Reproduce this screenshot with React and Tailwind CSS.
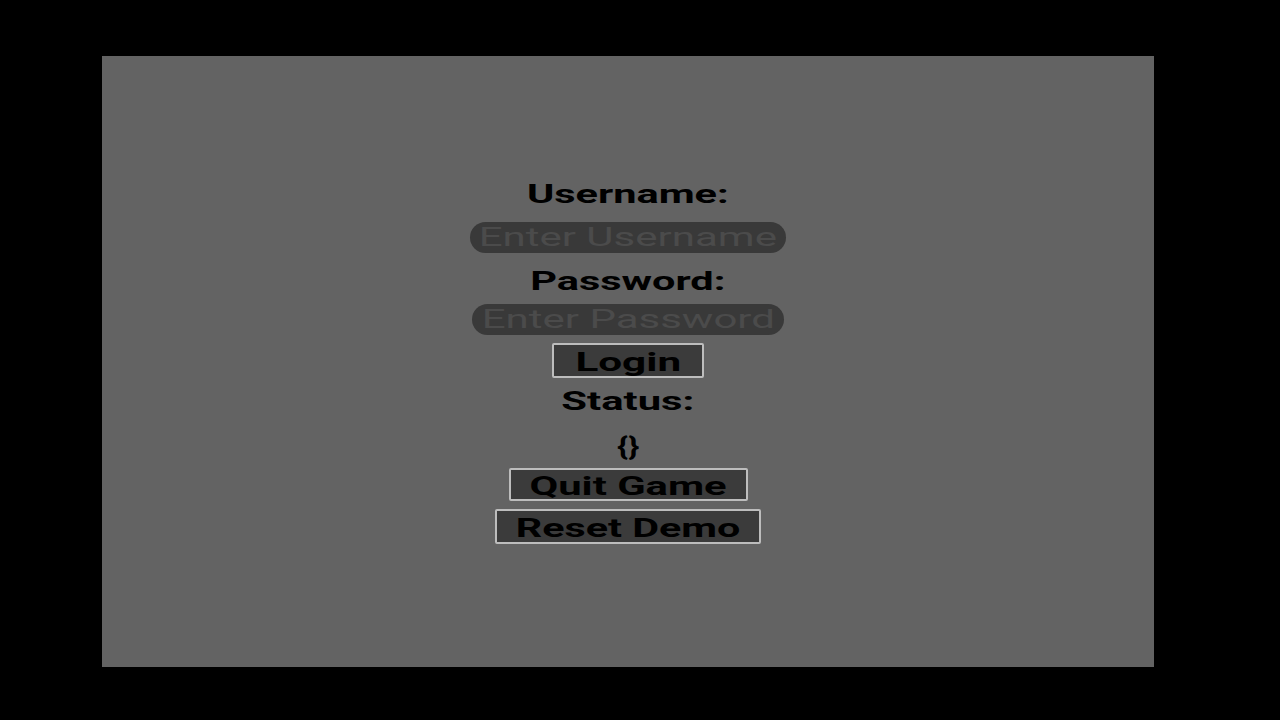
export default function App() {
  const font = { fontFamily: "Roboto, 'Liberation Sans', sans-serif" };
  return (
    <div className="w-[1280px] h-[720px] bg-black pt-[56px] pl-[102px]" style={font}>
      <div className="w-[1052px] h-[611px] bg-[#636363] flex flex-col items-center pt-[120px]">
        <div className="h-[36px] flex items-center justify-center">
          <span className="inline-block scale-x-[1.66] text-[25px] font-bold text-black leading-none">Username:</span>
        </div>
        <div className="mt-[10px] w-[316px] h-[31px] rounded-full bg-[#393939] flex items-center justify-center">
          <span className="inline-block scale-x-[1.68] text-[25px] text-[#4b4b4b] leading-none">Enter Username</span>
        </div>
        <div className="mt-[10px] h-[36px] flex items-center justify-center">
          <span className="inline-block scale-x-[1.66] text-[25px] font-bold text-black leading-none">Password:</span>
        </div>
        <div className="mt-[5px] w-[312px] h-[31px] rounded-full bg-[#393939] flex items-center justify-center">
          <span className="inline-block scale-x-[1.68] text-[25px] text-[#4b4b4b] leading-none">Enter Password</span>
        </div>
        <div className="mt-[8px] w-[152px] h-[35px] rounded-[2px] border-2 border-[#bdbdbd] bg-[#3b3b3b] flex items-center justify-center pt-[3px]">
          <span className="inline-block scale-x-[1.69] text-[25px] font-bold text-black leading-none">Login</span>
        </div>
        <div className="mt-[5px] h-[36px] flex items-center justify-center">
          <span className="inline-block scale-x-[1.67] text-[25px] font-bold text-black leading-none">Status:</span>
        </div>
        <div className="mt-[9px] h-[36px] flex items-center justify-center">
          <span className="inline-block scale-x-[1.35] text-[25px] font-bold text-black leading-none">{"{}"}</span>
        </div>
        <div className="mt-[4px] w-[239px] h-[33px] rounded-[2px] border-2 border-[#bdbdbd] bg-[#3b3b3b] flex items-center justify-center pt-[3px]">
          <span className="inline-block scale-x-[1.67] text-[25px] font-bold text-black leading-none">Quit Game</span>
        </div>
        <div className="mt-[8px] w-[266px] h-[35px] rounded-[2px] border-2 border-[#bdbdbd] bg-[#3b3b3b] flex items-center justify-center pt-[3px]">
          <span className="inline-block scale-x-[1.65] text-[25px] font-bold text-black leading-none">Reset Demo</span>
        </div>
      </div>
    </div>
  );
}
